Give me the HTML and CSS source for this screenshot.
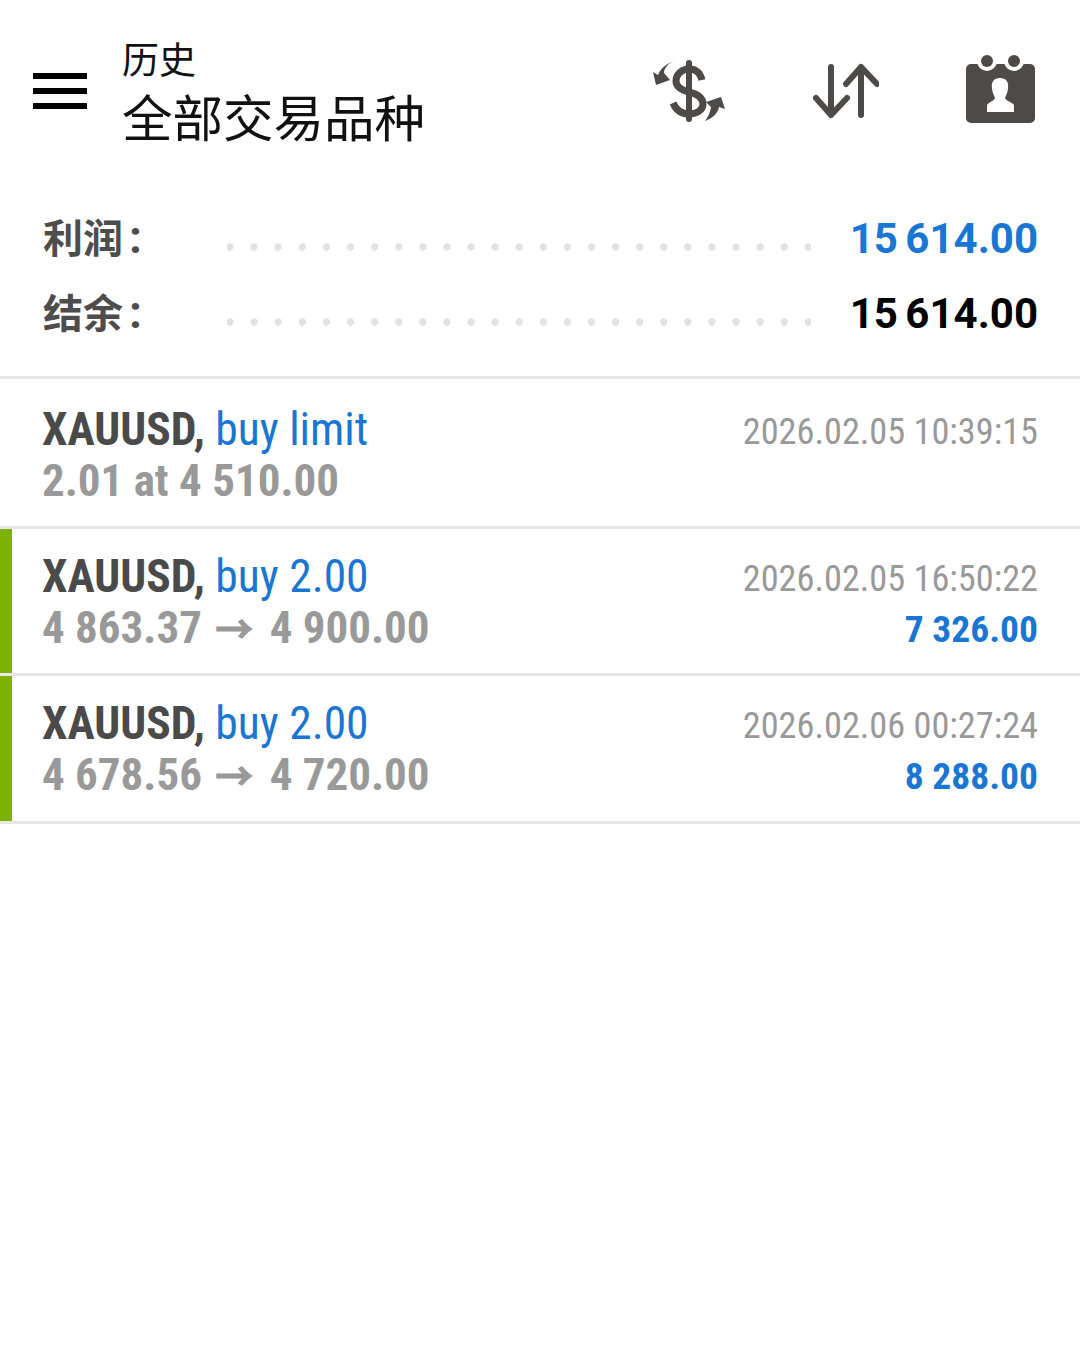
FILE: index.html
```html
<!DOCTYPE html>
<html lang="zh-CN">
<head>
    <meta charset="UTF-8">
    <meta name="viewport" content="width=device-width, initial-scale=1.0">
    <title>历史</title>
    <link rel="stylesheet" href="styles.css">
</head>
<body>
    <header class="top-bar">
        <div class="menu-icon"><span></span><span></span><span></span></div>
        <div class="titles">
            <div class="title-small">历史</div>
            <div class="title-big">全部交易品种</div>
        </div>
        <div class="actions">
            <svg class="icon-money" width="74" height="62" viewBox="0 0 74 62">
                <g fill="none" stroke="#4d4a48">
                    <path d="M36 3V59" stroke-width="6" stroke-linecap="round"/>
                    <path d="M49 20C47 12 42 9 36 9C28 9 23 15 23 21C23 27 28 30 36 32C44 34 50 38 50 44C50 50 44 54 36 54C28 54 23 50 20 43" stroke-width="7"/>
                </g>
                <path d="M21 1C14 4 11 9 11 13L17 20L3 25L0 12L5 15C8 8 13 4 21 1Z" fill="#4d4a48"/>
                <path d="M52 61C60 58 65 53 66 47L72 49L68 37L53 42L58 47C57 53 55 57 52 61Z" fill="#4d4a48"/>
            </svg>
            <svg class="icon-sort" width="66" height="56" viewBox="0 0 66 56">
                <g fill="none" stroke="#4d4a48" stroke-width="6" stroke-linecap="round" stroke-linejoin="round">
                    <path d="M18 4V52M3 35L18 52L34 35"/>
                    <path d="M48 52V4M33 21L48 4L64 21"/>
                </g>
            </svg>
            <svg class="icon-contact" width="70" height="74" viewBox="0 0 70 74">
                <rect x="1" y="10" width="69" height="59" rx="5" fill="#4d4a48"/>
                <circle cx="22" cy="7" r="10" fill="#fff"/>
                <circle cx="49" cy="7" r="10" fill="#fff"/>
                <circle cx="22" cy="7" r="6" fill="#4d4a48"/>
                <circle cx="49" cy="7" r="6" fill="#4d4a48"/>
                <path d="M35 24C41 24 44 28 43 34C43 38 41 41 40 44C41 47 47 48 49 51V58H22V51C24 48 29 47 30 44C29 41 27 38 27 34C26 28 29 24 35 24Z" fill="#fff"/>
            </svg>
        </div>
    </header>

    <section class="summary">
        <div class="summary-row">
            <span class="summary-label">利润<span class="colon">:</span></span>
            <span class="dots"></span>
            <span class="summary-value blue">15 614.00</span>
        </div>
        <div class="summary-row">
            <span class="summary-label">结余<span class="colon">:</span></span>
            <span class="dots"></span>
            <span class="summary-value">15 614.00</span>
        </div>
    </section>

    <div class="trade pending">
        <div class="trade-left">
            <div class="trade-name"><b>XAUUSD,</b> <span class="blue">buy limit</span></div>
            <div class="trade-price">2.01 at 4 510.00</div>
        </div>
        <div class="trade-right">
            <div class="trade-time">2026.02.05 10:39:15</div>
        </div>
    </div>
    <div class="trade closed">
        <div class="trade-left">
            <div class="trade-name"><b>XAUUSD,</b> <span class="blue">buy 2.00</span></div>
            <div class="trade-price">4 863.37 <span class="arrow">→</span> 4 900.00</div>
        </div>
        <div class="trade-right">
            <div class="trade-time">2026.02.05 16:50:22</div>
            <div class="trade-profit blue">7 326.00</div>
        </div>
    </div>
    <div class="trade closed last">
        <div class="trade-left">
            <div class="trade-name"><b>XAUUSD,</b> <span class="blue">buy 2.00</span></div>
            <div class="trade-price">4 678.56 <span class="arrow">→</span> 4 720.00</div>
        </div>
        <div class="trade-right">
            <div class="trade-time">2026.02.06 00:27:24</div>
            <div class="trade-profit blue">8 288.00</div>
        </div>
    </div>
</body>
</html>
```

FILE: styles.css
```css
body {
    margin: 0;
    background: #fff;
    font-family: Roboto, "Noto Sans CJK SC", sans-serif;
    font-stretch: 75%;
}
.blue { color: #1976d2; }

.top-bar {
    display: flex;
    align-items: center;
    height: 182px;
    padding: 0 45px 0 33px;
    box-sizing: border-box;
}
.menu-icon {
    display: flex;
    flex-direction: column;
    gap: 9px;
    width: 54px;
    margin-right: 35px;
}
.menu-icon span {
    height: 6px;
    background: #000;
}
.titles {
    flex: 1;
    padding-top: 7px;
    font-stretch: 100%;
    color: #111;
}
.title-small { font-size: 37px; line-height: 49px; }
.title-big { font-size: 50.5px; line-height: 67px; }
.actions {
    display: flex;
    align-items: center;
    gap: 86px;
}

.summary {
    height: 197px;
    padding: 19px 42px 0 43px;
    box-sizing: border-box;
    border-bottom: 3px solid #e6e6e6;
}
.summary-row {
    display: flex;
    align-items: center;
    height: 75px;
}
.summary-label {
    width: 184px;
    margin-bottom: 6px;
    font-family: "Noto Sans CJK SC", sans-serif;
    font-size: 40px;
    font-weight: 700;
    color: #4d4d4d;
}
.colon {
    margin-left: 6px;
    font-family: Roboto, sans-serif;
    font-size: 46px;
    font-stretch: 100%;
}
.dots {
    width: 584px;
    height: 8px;
    margin-top: 16px;
    background-image: radial-gradient(circle, #e2e2e2 3.5px, transparent 4px);
    background-position: -9px 0;
    background-size: 24.1px 8px;
}
.summary-value {
    margin-left: auto;
    font-size: 42px;
    font-weight: 700;
    font-stretch: 100%;
    word-spacing: -3px;
    color: #000;
}
.summary-value.blue { color: #1976d2; }

.trade {
    display: flex;
    justify-content: space-between;
    height: 147px;
    box-sizing: border-box;
    padding: 22px 42px 0;
    border-bottom: 3px solid #e6e6e6;
}
.trade.pending { height: 150px; padding-top: 25px; }
.trade.last { height: 148px; }
.trade.closed { box-shadow: inset 12px 0 0 #7fb200; }
.trade-name { font-size: 45.5px; line-height: 51px; font-weight: 400; }
.trade-name b { font-weight: 700; color: #4a4a4a; }
.trade-price { font-size: 45px; line-height: 51px; font-weight: 700; color: #999; }
.arrow {
    margin: 0 6px 0 3px;
    font-size: 38px;
    -webkit-text-stroke: 1px #999;
}
.trade-right { padding-top: 2px; text-align: right; }
.trade-time { font-size: 36.3px; line-height: 51px; color: #999; }
.trade-profit { font-size: 37.5px; line-height: 51px; font-weight: 700; }
```
